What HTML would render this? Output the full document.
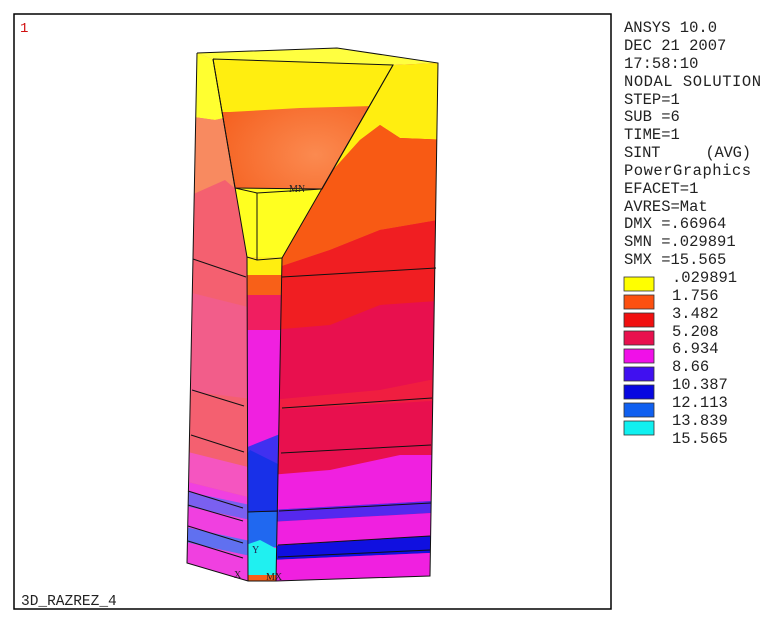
<!DOCTYPE html>
<html><head><meta charset="utf-8"><style>
html,body{margin:0;padding:0;background:#fff;width:769px;height:626px;overflow:hidden}
svg{position:absolute;left:0;top:0}
.t{font-family:"Liberation Mono","Courier New",monospace;font-size:15.5px;fill:#222}
</style></head><body>
<svg width="769" height="626" viewBox="0 0 769 626">
<defs>
<clipPath id="cl"><polygon points="197,53 213,59 247,257 248,581 187,563"/></clipPath>
<clipPath id="cb"><polygon points="213,59 393,65 322,189 235,188"/></clipPath>
<clipPath id="cr"><polygon points="393,65 438,63 430,576 276,581 282,258 322,189"/></clipPath>
<clipPath id="cc"><polygon points="247,257 282,258 276,581 248,581"/></clipPath>
<radialGradient id="gb" cx="0.55" cy="0.7" r="0.6"><stop offset="0" stop-color="#fb8a50"/><stop offset="1" stop-color="#f45a18"/></radialGradient>
</defs>
<rect x="14" y="14" width="597" height="595" fill="#fff" stroke="#000" stroke-width="1.5"/>
<polygon points="197,53 337,48 438,63 393,65 213,59" fill="#ffff40"/>
<g clip-path="url(#cl)">
<rect x="180" y="40" width="80" height="560" fill="#f46070"/>
<polygon points="180,40 260,40 260,110 215,120 180,115" fill="#ffff30"/>
<polygon points="180,115 215,120 260,110 260,210 225,180 180,200" fill="#f88a60"/>
<polygon points="180,290 260,310 260,400 180,390" fill="#f25d8a"/>
<polygon points="180,450 260,470 260,500 180,480" fill="#f555c0"/>
<polygon points="180,480 260,500 260,520 180,505" fill="#f040e0"/>
<polygon points="180,490 260,507 260,522 180,505" fill="#7a60f0"/>
<polygon points="180,505 260,522 260,545 180,528" fill="#f040e0"/>
<polygon points="180,526 260,543 260,558 180,541" fill="#6070f0"/>
<polygon points="180,541 260,558 260,600 180,600" fill="#f040e0"/>
</g>
<g clip-path="url(#cb)">
<rect x="200" y="50" width="210" height="150" fill="url(#gb)"/>
<polygon points="200,50 410,50 410,105 300,108 230,112 200,112" fill="#ffee10"/>
</g>
<g clip-path="url(#cr)">
<rect x="270" y="50" width="180" height="540" fill="#e8104e"/>
<polygon points="270,50 450,50 450,140 400,138 380,125 360,140 270,240" fill="#ffee10"/>
<polygon points="270,240 360,140 380,125 400,138 450,140 450,218 380,230 330,250 270,270" fill="#f85a14"/>
<polygon points="270,270 330,250 380,230 450,218 450,300 380,305 330,325 270,330" fill="#f01e22"/>
<polygon points="270,400 380,390 430,380 450,380 450,400 270,410" fill="#f01e40"/>
<polygon points="270,475 330,470 400,455 450,455 450,500 270,510" fill="#f020e0"/>
<polygon points="270,510 450,500 450,512 270,522" fill="#5528ee"/>
<polygon points="270,522 450,512 450,535 270,546" fill="#f020e0"/>
<polygon points="270,546 450,535 450,552 270,560" fill="#1010e0"/>
<polygon points="270,560 450,552 450,590 270,590" fill="#f020e0"/>
</g>
<polygon points="235,188 322,189 282,258 247,257" fill="#ffff20"/>
<g clip-path="url(#cc)">
<rect x="240" y="250" width="50" height="340" fill="#f020e0"/>
<rect x="240" y="255" width="50" height="20" fill="#ffee10"/>
<rect x="240" y="275" width="50" height="20" fill="#f86018"/>
<rect x="240" y="295" width="50" height="35" fill="#f01e60"/>
<polygon points="240,450 290,430 290,512 240,512" fill="#4030f0"/>
<polygon points="240,465 250,450 270,460 290,470 290,512 240,512" fill="#1830e8"/>
<rect x="240" y="512" width="50" height="35" fill="#2068f0"/>
<polygon points="240,547 260,540 275,548 290,545 290,590 240,590" fill="#20f0f0"/>
<rect x="240" y="575" width="50" height="10" fill="#f86018"/>
</g>
<g fill="none" stroke="#111" stroke-width="1">
<polyline points="197,53 337,48 438,63 430,576 276,581 248,581 187,563 197,53"/>
<polyline points="213,59 393,65 322,189 235,188 213,59"/>
<polyline points="213,59 247,257 248,581"/>
<polyline points="393,65 282,258 276,581"/>
<polyline points="235,188 257,193 322,189"/>
<polyline points="257,193 257,260"/>
<polyline points="247,257 257,260 282,258"/>
<line x1="193" y1="259" x2="246" y2="277"/>
<line x1="282" y1="277" x2="436" y2="268"/>
<line x1="192" y1="390" x2="244" y2="406"/>
<line x1="282" y1="408" x2="432" y2="398"/>
<line x1="191" y1="435" x2="244" y2="452"/>
<line x1="281" y1="453" x2="431" y2="445"/>
<line x1="188" y1="491" x2="243" y2="508"/>
<line x1="279" y1="511" x2="431" y2="503"/>
<line x1="188" y1="505" x2="243" y2="521"/>
<line x1="188" y1="526" x2="243" y2="543"/>
<line x1="278" y1="545" x2="430" y2="536"/>
<line x1="188" y1="541" x2="243" y2="558"/>
<line x1="278" y1="557" x2="430" y2="550"/>
<line x1="248" y1="512" x2="278" y2="511"/>
</g>
<text x="289" y="192" font-family="Liberation Serif,serif" font-size="10" fill="#222">MN</text>
<text x="266" y="580" font-family="Liberation Serif,serif" font-size="10" fill="#222">MX</text>
<text x="234" y="578" font-family="Liberation Serif,serif" font-size="10" fill="#222">X</text>
<text x="252" y="553" font-family="Liberation Serif,serif" font-size="10" fill="#225">Y</text>
<text x="20" y="32" font-family="Liberation Mono,monospace" font-size="14" fill="#d01010">1</text>
<text x="21" y="605" class="t" style="font-size:14.5px">3D_RAZREZ_4</text>
<g class="t">
<text x="624" y="32">ANSYS 10.0</text>
<text x="624" y="50">DEC 21 2007</text>
<text x="624" y="68">17:58:10</text>
<text x="624" y="86" textLength="137">NODAL SOLUTION</text>
<text x="624" y="104">STEP=1</text>
<text x="624" y="121">SUB =6</text>
<text x="624" y="139">TIME=1</text>
<text x="624" y="157" xml:space="preserve" textLength="127">SINT     (AVG)</text>
<text x="624" y="175" textLength="127">PowerGraphics</text>
<text x="624" y="193">EFACET=1</text>
<text x="624" y="211">AVRES=Mat</text>
<text x="624" y="228">DMX =.66964</text>
<text x="624" y="246">SMN =.029891</text>
<text x="624" y="264">SMX =15.565</text>
<text x="672" y="282">.029891</text>
<text x="672" y="300">1.756</text>
<text x="672" y="318">3.482</text>
<text x="672" y="336">5.208</text>
<text x="672" y="353">6.934</text>
<text x="672" y="371">8.66</text>
<text x="672" y="389">10.387</text>
<text x="672" y="407">12.113</text>
<text x="672" y="425">13.839</text>
<text x="672" y="443">15.565</text>
</g>
<g stroke="#333" stroke-width="0.8">
<rect x="624" y="277" width="30" height="14" fill="#ffff00"/>
<rect x="624" y="295" width="30" height="14" fill="#fc5010"/>
<rect x="624" y="313" width="30" height="14" fill="#f01010"/>
<rect x="624" y="331" width="30" height="14" fill="#e8104e"/>
<rect x="624" y="349" width="30" height="14" fill="#f010e8"/>
<rect x="624" y="367" width="30" height="14" fill="#4010f0"/>
<rect x="624" y="385" width="30" height="14" fill="#0808e0"/>
<rect x="624" y="403" width="30" height="14" fill="#1060f0"/>
<rect x="624" y="421" width="30" height="14" fill="#10f0f0"/>
</g>
</svg>
</body></html>
